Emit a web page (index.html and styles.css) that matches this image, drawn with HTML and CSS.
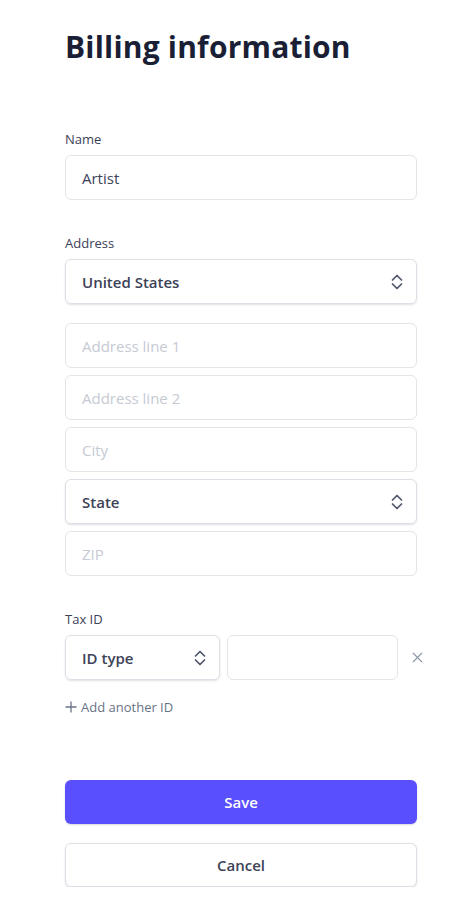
FILE: index.html
```html
<!DOCTYPE html>
<html>
<head>
<meta charset="utf-8">
<link rel="stylesheet" href="styles.css">
</head>
<body>
<main class="page">
  <h1 class="title">Billing information</h1>

  <section class="group group-name">
    <div class="label">Name</div>
    <div class="field"><span class="value">Artist</span></div>
  </section>

  <section class="group group-address">
    <div class="label">Address</div>
    <div class="select select-country"><span class="sel-text">United States</span><svg class="chev" viewBox="0 0 14 18"><path d="M2.5 7L7 2.5L11.5 7M2.5 11L7 15.5L11.5 11" fill="none" stroke="#4f566b" stroke-width="1.7" stroke-linecap="round" stroke-linejoin="round"/></svg></div>
    <div class="stack">
      <div class="field"><span class="ph">Address line 1</span></div>
      <div class="field"><span class="ph">Address line 2</span></div>
      <div class="field"><span class="ph">City</span></div>
      <div class="select"><span class="sel-text">State</span><svg class="chev" viewBox="0 0 14 18"><path d="M2.5 7L7 2.5L11.5 7M2.5 11L7 15.5L11.5 11" fill="none" stroke="#4f566b" stroke-width="1.7" stroke-linecap="round" stroke-linejoin="round"/></svg></div>
      <div class="field"><span class="ph">ZIP</span></div>
    </div>
  </section>

  <section class="group group-tax">
    <div class="label">Tax ID</div>
    <div class="tax-row">
      <div class="select select-id"><span class="sel-text">ID type</span><svg class="chev" viewBox="0 0 14 18"><path d="M2.5 7L7 2.5L11.5 7M2.5 11L7 15.5L11.5 11" fill="none" stroke="#4f566b" stroke-width="1.7" stroke-linecap="round" stroke-linejoin="round"/></svg></div>
      <div class="field field-id"></div>
      <svg class="remove" viewBox="0 0 12 12"><path d="M1 1L11 11M11 1L1 11" fill="none" stroke="#8792a2" stroke-width="1.4"/></svg>
    </div>
    <div class="add"><svg class="plus" viewBox="0 0 12 12"><path d="M6 0.5V11.5M0.5 6H11.5" fill="none" stroke="#697386" stroke-width="1.3"/></svg><span>Add another ID</span></div>
  </section>

  <div class="actions">
    <button class="btn btn-primary">Save</button>
    <button class="btn btn-secondary">Cancel</button>
  </div>
</main>
</body>
</html>
```

FILE: styles.css
```css
* { box-sizing: border-box; }
html, body { margin: 0; padding: 0; background: #fff; }
body {
  font-family: "Open Sans", "Noto Sans", "Liberation Sans", sans-serif;
  color: #3c4257;
}
.page {
  width: 352px;
  margin-left: 65px;
  padding-top: 25px;
}
.title {
  margin: 0;
  font-size: 30px;
  line-height: 44px;
  font-weight: 700;
  color: #1a1f36;
  letter-spacing: 0.2px;
}
.group-name { margin-top: 61px; }
.group-address { margin-top: 34px; }
.group-tax { margin-top: 34px; }
.label {
  font-size: 13px;
  line-height: 18px;
  font-weight: 500;
  color: #3c4257;
  margin-bottom: 7px;
}
.select-country { margin-bottom: 19px; }
.stack {
  display: flex;
  flex-direction: column;
  gap: 7px;
}
.field, .select {
  height: 45px;
  border-radius: 6px;
  display: flex;
  align-items: center;
  padding: 0 16px;
  font-size: 15px;
}
.field {
  border: 1px solid #e3e5ea;
  background: #fff;
}
.select {
  border: 1px solid #dcdfe5;
  box-shadow: 0 1px 2px rgba(60, 66, 87, 0.16);
  justify-content: space-between;
  padding-right: 12px;
}
.value { color: #3c4257; }
.ph { color: #c6cad3; }
.sel-text { font-weight: 600; color: #3c4257; }
.chev { display: block; flex: none; width: 14px; height: 18px; }
.tax-row {
  display: flex;
  align-items: center;
  gap: 7px;
}
.select-id { width: 155px; flex: none; }
.field-id { width: 171px; flex: none; }
.remove { flex: none; width: 11px; height: 11px; margin-left: 7px; }
.add {
  margin-top: 19px;
  display: flex;
  align-items: center;
  gap: 4px;
  font-size: 13px;
  color: #697386;
  line-height: 16px;
}
.plus { flex: none; width: 12px; height: 12px; }
.actions {
  margin-top: 65px;
  display: flex;
  flex-direction: column;
  gap: 19px;
}
.btn {
  height: 44px;
  border-radius: 6px;
  font-family: inherit;
  font-size: 15px;
  font-weight: 600;
  cursor: pointer;
}
.btn-primary {
  background: #5a4ffd;
  color: #fff;
  border: none;
  box-shadow: 0 1px 2px rgba(60, 66, 87, 0.2);
}
.btn-secondary {
  background: #fff;
  color: #3c4257;
  border: 1px solid #dcdfe5;
  box-shadow: 0 1px 2px rgba(60, 66, 87, 0.16);
}
```
